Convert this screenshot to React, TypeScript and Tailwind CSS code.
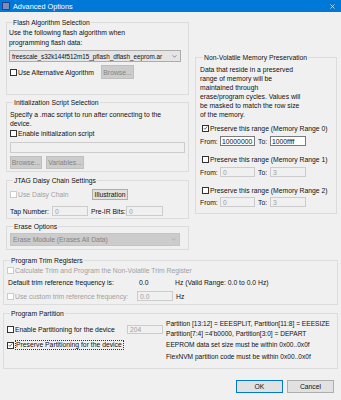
import type { ReactNode } from "react";

function Group({ title, className = "", children }: { title: string; className?: string; children: ReactNode }) {
  return (
    <fieldset className={`border border-[#dcdcdc] ${className}`}>
      <legend className="ml-[3px] px-[1px] leading-[9px]">{title}</legend>
      {children}
    </fieldset>
  );
}

function Check({ checked = false, disabled = false }: { checked?: boolean; disabled?: boolean }) {
  return (
    <span
      className={`flex h-[7px] w-[7px] shrink-0 items-center justify-center border bg-white ${
        disabled ? "border-[#cccccc]" : "border-[#333333]"
      }`}
    >
      {checked && (
        <svg viewBox="0 0 7 7" className="h-[6px] w-[6px]">
          <path d="M1 3.6 L2.7 5.3 L6 1.4" fill="none" stroke="#222" strokeWidth="0.9" />
        </svg>
      )}
    </span>
  );
}

function CheckRow({ label, checked, disabled, className = "" }: { label: string; checked?: boolean; disabled?: boolean; className?: string }) {
  return (
    <div className={`flex h-[9px] items-center gap-[1px] ${disabled ? "text-[#a0a0a0]" : ""} ${className}`}>
      <Check checked={checked} disabled={disabled} />
      <span>{label}</span>
    </div>
  );
}

function Field({ value = "", disabled = false, className = "" }: { value?: string; disabled?: boolean; className?: string }) {
  return (
    <div
      className={`flex items-center overflow-hidden border px-[2px] ${
        disabled ? "border-[#cccccc] bg-[#f0f0f0] text-[#a0a0a0]" : "border-[#7a7a7a] bg-white"
      } ${className}`}
    >
      {value}
    </div>
  );
}

function Btn({ label, disabled = false, className = "" }: { label: string; disabled?: boolean; className?: string }) {
  return (
    <div
      className={`flex items-center justify-center border ${
        disabled ? "border-[#bfbfbf] bg-[#cccccc] text-[#838383]" : "border-[#adadad] bg-[#e1e1e1]"
      } ${className}`}
    >
      {label}
    </div>
  );
}

function Chevron({ color = "#555555" }: { color?: string }) {
  return (
    <svg viewBox="0 0 6 4" className="h-[3px] w-[5px] shrink-0">
      <path d="M0.5 0.5 L3 3 L5.5 0.5" fill="none" stroke={color} strokeWidth="0.8" />
    </svg>
  );
}

export default function App() {
  return (
    <div className="h-[400px] w-[341px] overflow-hidden whitespace-nowrap bg-[#f0f0f0] font-['Liberation_Sans',sans-serif] text-[6.8px] leading-[9px] text-[#111111]">
      {/* title bar */}
      <div className="flex h-[12px] items-center bg-[#0078d7] pl-[2px] pr-[6px] text-white">
        <svg viewBox="0 0 8 8" className="h-[8px] w-[8px]">
          <rect width="8" height="8" fill="#27408b" />
          <path d="M1 2 H3 M1 4 H3 M1 6 H3 M5 2 H7 M5 4 H7 M5 6 H7 M4 1 V7" stroke="#ffffff" strokeWidth="0.8" />
        </svg>
        <span className="ml-[3px] text-[7.3px]">Advanced Options</span>
        <svg viewBox="0 0 6 6" className="ml-auto h-[5px] w-[5px]">
          <path d="M0.5 0.5 L5.5 5.5 M5.5 0.5 L0.5 5.5" stroke="#ffffff" strokeWidth="0.8" />
        </svg>
      </div>

      <div className="px-[3px]">
        <div className="flex">
          {/* left column */}
          <div className="ml-[3px] w-[183px]">
            <Group title="Flash Algorithm Selection" className="mt-[5.5px] px-[2px] pb-[15px]">
              <div className="mt-[1.5px] leading-[10px]">
                <div>Use the following flash algorithm when</div>
                <div>programming flash data:</div>
              </div>
              <div className="mt-[2px] flex h-[12px] w-[172px] items-center justify-between border border-[#acacac] bg-[#e5e5e5] pl-[2px] pr-[3px]">
                <span className="text-[6.3px]">freescale_s32k144f512m15_pflash_dflash_eeprom.ar</span>
                <Chevron />
              </div>
              <div className="mt-[3px] flex items-center">
                <div className="w-[92px]">
                  <CheckRow label="Use Alternative Algorithm" className="ml-[1px]" />
                </div>
                <Btn label="Browse..." disabled className="h-[14px] w-[33px]" />
              </div>
            </Group>

            <Group title="Initialization Script Selection" className="mt-[2.5px] px-[3px] pb-[2px]">
              <div className="mt-[3px]">
                <div>Specify a .mac script to run after connecting to the</div>
                <div>device.</div>
              </div>
              <CheckRow label="Enable initialization script" className="mt-[1px]" />
              <Field disabled className="mt-[4.5px] h-[11px] w-[175px]" />
              <div className="mt-[3px] flex gap-[4px]">
                <Btn label="Browse..." disabled className="h-[13px] w-[32px]" />
                <Btn label="Variables..." disabled className="h-[13px] w-[38px]" />
              </div>
            </Group>

            <Group title="JTAG Daisy Chain Settings" className="mt-[3.5px] px-[3px] pb-[2px]">
              <div className="mt-[4.5px] flex items-center">
                <div className="w-[82px]">
                  <CheckRow label="Use Daisy Chain" disabled />
                </div>
                <Btn label="Illustration" className="h-[11px] w-[36px]" />
              </div>
              <div className="mt-[6px] flex items-center">
                <span className="w-[42px]">Tap Number:</span>
                <Field value="0" disabled className="h-[10px] w-[36px]" />
                <span className="ml-[3px] w-[35px]">Pre-IR Bits:</span>
                <Field value="0" disabled className="h-[10px] w-[37px]" />
              </div>
            </Group>

            <Group title="Erase Options" className="mt-[2.5px] px-[3px] pb-[3px]">
              <div className="mt-[2.5px] flex h-[13px] w-[170px] items-center justify-between border border-[#c4c4c4] bg-[#cccccc] pl-[2px] pr-[3px] text-[#838383]">
                <span>Erase Module (Erases All Data)</span>
                <Chevron color="#a0a0a0" />
              </div>
            </Group>
          </div>

          {/* right column */}
          <div className="ml-[6px] w-[142px]">
            <Group title="Non-Volatile Memory Preservation" className="mt-[40.5px] px-[4px] pb-[6px]">
              <div className="mt-[3px]">
                <div>Data that reside in a preserved</div>
                <div>range of memory will be</div>
                <div>maintained through</div>
                <div>erase/program cycles. Values will</div>
                <div>be masked to match the row size</div>
                <div>of the memory.</div>
              </div>
              <CheckRow label="Preserve this range (Memory Range 0)" checked className="mt-[5px] ml-[2px]" />
              <div className="mt-[3.5px] flex items-center">
                <span className="w-[20px]">From:</span>
                <Field value="10000000" className="h-[10px] w-[35px] !px-[1px]" />
                <span className="ml-[3px] w-[12px]">To:</span>
                <Field value="1000ffff" className="h-[10px] w-[36px] !px-[1px]" />
              </div>
              <CheckRow label="Preserve this range (Memory Range 1)" className="mt-[8.5px] ml-[2px]" />
              <div className="mt-[3.5px] flex items-center">
                <span className="w-[20px]">From:</span>
                <Field value="0" disabled className="h-[10px] w-[35px]" />
                <span className="ml-[3px] w-[12px]">To:</span>
                <Field value="3" disabled className="h-[10px] w-[36px]" />
              </div>
              <CheckRow label="Preserve this range (Memory Range 2)" className="mt-[8.5px] ml-[2px]" />
              <div className="mt-[2.5px] flex items-center">
                <span className="w-[20px]">From:</span>
                <Field value="0" disabled className="h-[10px] w-[35px]" />
                <span className="ml-[3px] w-[12px]">To:</span>
                <Field value="3" disabled className="h-[10px] w-[36px]" />
              </div>
            </Group>
          </div>
        </div>

        <Group title="Program Trim Registers" className="mt-[5.5px] w-[335px] px-[3px] pb-[3px]">
          <CheckRow label="Calculate Trim and Program the Non-Volatile Trim Register" disabled className="mt-[1px]" />
          <div className="mt-[3px] flex h-[9px] items-center">
            <span className="ml-[1px] w-[131px]">Default trim reference frequency is:</span>
            <span className="w-[36px]">0.0</span>
            <span>Hz (Valid Range: 0.0 to 0.0 Hz)</span>
          </div>
          <div className="mt-[4.5px] flex items-center">
            <div className="w-[130px]">
              <CheckRow label="Use custom trim reference frequency:" disabled />
            </div>
            <Field value="0.0" disabled className="h-[10px] w-[36px]" />
            <span className="ml-[3px]">Hz</span>
          </div>
        </Group>

        <Group title="Program Partition" className="mt-[3.5px] w-[335px] px-[3px] pb-[7px]">
          <div className="flex">
            <div className="w-[159px] shrink-0">
              <div className="mt-[7.5px] flex items-center">
                <div className="w-[120px]">
                  <CheckRow label="Enable Partitioning for the device" />
                </div>
                <Field value="204" disabled className="h-[9px] w-[36px]" />
              </div>
              <div className="mt-[6.5px] flex h-[9px] items-center gap-[1px]">
                <Check checked />
                <span className="border border-dotted border-[#333333] pr-[1px] leading-[8px]">Preserve Partitioning for the device</span>
              </div>
            </div>
            <div className="mt-[1px] text-[6.6px]">
              <div className="leading-[10px]">
                <div>Partition [13:12] = EEESPLIT, Partition[11:8] = EEESIZE</div>
                <div>Partition[7:4] =4'b0000, Partition[3:0] = DEPART</div>
              </div>
              <div className="mt-[1.5px]">EEPROM data set size must be within 0x00..0x0f</div>
              <div className="mt-[3px]">FlexNVM partition code must be within 0x00..0x0f</div>
            </div>
          </div>
        </Group>

        <div className="mt-[11px] flex justify-end gap-[4px] pr-[4px]">
          <Btn label="OK" className="h-[13px] w-[47px] !border-[#0078d7]" />
          <Btn label="Cancel" className="h-[13px] w-[47px]" />
        </div>
      </div>
    </div>
  );
}
